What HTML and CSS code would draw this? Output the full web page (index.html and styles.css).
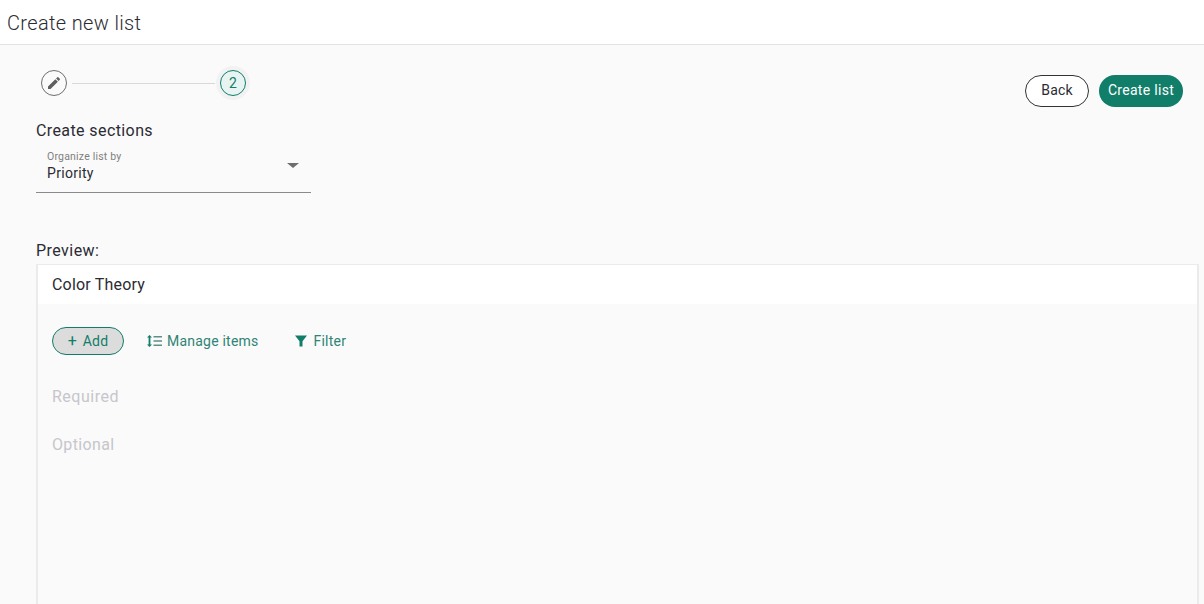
FILE: index.html
```html
<!DOCTYPE html>
<html lang="en">
  <head>
    <meta charset="UTF-8" />
    <title>Create new list</title>
    <link rel="stylesheet" href="styles.css">
  </head>
  <body>
    <header class="page-header">Create new list</header>
    <main class="content">
      <div class="top-row">
        <div class="setup">
          <div class="stepper">
            <span class="step step-done">
              <svg width="16" height="16" viewBox="0 0 24 24"><path fill="#5f5f5f" d="M3 17.250V21h3.750L17.810 9.940l-3.750-3.750L3 17.250zM20.710 7.040a1 1 0 0 0 0-1.410l-2.340-2.340a1 1 0 0 0-1.410 0l-1.830 1.830 3.750 3.750 1.830-1.830z"/></svg>
            </span>
            <span class="step-line"></span>
            <span class="step step-active">2</span>
          </div>
          <h2 class="section-title">Create sections</h2>
          <div class="select-field">
            <div class="select-text">
              <span class="select-label">Organize list by</span>
              <span class="select-value">Priority</span>
            </div>
            <span class="select-arrow"></span>
          </div>
        </div>
        <div class="actions">
          <button class="btn btn-outline">Back</button>
          <button class="btn btn-primary">Create list</button>
        </div>
      </div>
      <p class="preview-label">Preview:</p>
      <section class="preview">
        <div class="preview-title">Color Theory</div>
        <div class="toolbar">
          <button class="add-btn"><span class="plus">+</span> Add</button>
          <button class="tool-btn">
            <svg width="15" height="12" viewBox="0 0 15 12"><path fill="#117e6a" d="M2.500 0 5 2.600H3.400v6.800H5L2.500 12 0 9.400h1.600V2.600H0z"/><path fill="#5f8f85" d="M6.500 1h8.500v1.500H6.500zM6.500 5.200h8.500v1.500H6.500zM6.500 9.500h8.500V11H6.500z"/></svg>
            Manage items
          </button>
          <button class="tool-btn filter-btn">
            <svg width="12" height="12" viewBox="0 0 12 12"><path fill="#117e6a" d="M0 .5h12L7.500 6.200V11.500h-3V6.200z"/></svg>
            Filter
          </button>
        </div>
        <div class="group-name">Required</div>
        <div class="group-name">Optional</div>
      </section>
    </main>
  </body>
</html>
```

FILE: styles.css
```css
* {
  margin: 0;
  padding: 0;
  box-sizing: border-box;
}

html,
body {
  height: 604px;
  overflow: hidden;
}

body {
  background: #fafafa;
  color: #2b2b33;
  font-family: Roboto, "Liberation Sans", sans-serif;
  font-size: 15px;
}

button {
  font-family: inherit;
  cursor: pointer;
}

.page-header {
  height: 45px;
  padding: 0 7px;
  background: #fff;
  border-bottom: 1px solid #e3e3e3;
  font-size: 20px;
  font-weight: 300;
  line-height: 46px;
  letter-spacing: 0.35px;
}

.content {
  padding: 0 5px 0 36px;
}

.top-row {
  display: flex;
  justify-content: space-between;
}

.setup {
  width: 275px;
}

.stepper {
  display: flex;
  align-items: center;
  height: 26px;
  margin-top: 25px;
  padding-left: 5px;
}

.step {
  display: flex;
  flex: none;
  align-items: center;
  justify-content: center;
  width: 26px;
  height: 26px;
  border-radius: 50%;
  font-size: 14px;
}

.step-done {
  border: 1px solid #6e6e6e;
}

.step-active {
  border: 1px solid #117e6a;
  background: #e8f4f2;
  box-shadow: 0 0 0 4px #f2f2f2;
  color: #117e6a;
}

.step-line {
  width: 143px;
  height: 1px;
  margin: 0 5px;
  background: #d9d9d9;
}

.section-title {
  margin-top: 25px;
  font-size: 16px;
  font-weight: 400;
  line-height: 20px;
  letter-spacing: 0.4px;
}

.select-field {
  display: flex;
  justify-content: space-between;
  height: 50px;
  margin-top: 2px;
  padding: 8px 12px 0 11px;
  border-bottom: 1px solid #8a8a8a;
}

.select-text {
  display: flex;
  flex-direction: column;
}

.select-label {
  color: #7f7f7f;
  font-size: 10.5px;
  line-height: 11px;
  letter-spacing: 0.2px;
}

.select-value {
  margin-top: 2px;
  font-size: 14px;
  line-height: 18px;
  letter-spacing: 0.3px;
}

.select-arrow {
  width: 0;
  height: 0;
  margin-top: 12px;
  border-top: 5px solid #6e6e6e;
  border-left: 6px solid transparent;
  border-right: 6px solid transparent;
}

.actions {
  display: flex;
  gap: 10px;
  margin-top: 30px;
  margin-right: 16px;
}

.btn {
  height: 32px;
  padding-bottom: 2px;
  border-radius: 16px;
  font-size: 14px;
  letter-spacing: 0.2px;
}

.btn-outline {
  width: 64px;
  border: 1px solid #333;
  background: #fff;
  color: #2b2b33;
}

.btn-primary {
  width: 84px;
  border: none;
  background: #117e6a;
  color: #fff;
  font-weight: 400;
  letter-spacing: 0.3px;
}

.preview-label {
  margin-top: 48px;
  font-size: 16px;
  line-height: 20px;
  letter-spacing: 0.45px;
}

.preview {
  height: 340px;
  margin-top: 3px;
  border: 2px solid #ebebeb;
  border-top-width: 1px;
  border-bottom: none;
}

.preview-title {
  height: 39px;
  padding-left: 14px;
  background: #fff;
  font-size: 16px;
  line-height: 39px;
  letter-spacing: 0.2px;
}

.toolbar {
  display: flex;
  align-items: center;
  margin-top: 23px;
  padding-left: 14px;
}

.add-btn {
  width: 72px;
  height: 28px;
  padding-bottom: 2px;
  border: 1px solid #117e6a;
  border-radius: 14px;
  background: #dcdcdc;
  color: #117e6a;
  font-size: 14px;
  letter-spacing: 0.25px;
}

.plus {
  margin-right: 2px;
  font-size: 16px;
}

.tool-btn {
  display: flex;
  align-items: center;
  gap: 5px;
  margin-left: 23px;
  padding-bottom: 1px;
  border: none;
  background: none;
  color: #2f8475;
  font-size: 14px;
  letter-spacing: 0.22px;
}

.filter-btn {
  gap: 7px;
  margin-left: 36px;
}

.group-name {
  height: 48px;
  padding-left: 14px;
  color: #c6c6cb;
  font-size: 16px;
  line-height: 48px;
  letter-spacing: 0.5px;
}

.group-name:last-child {
  letter-spacing: 0.35px;
}

.toolbar + .group-name {
  margin-top: 18px;
}
```
